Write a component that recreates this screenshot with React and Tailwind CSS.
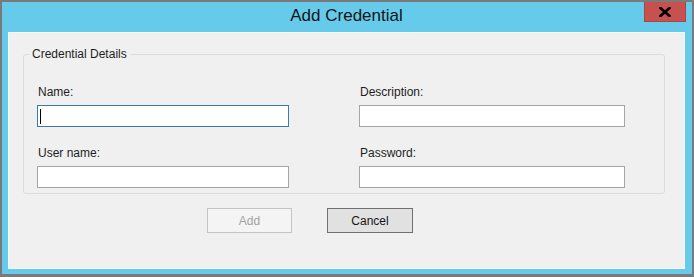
import React from 'react';

const font = { fontFamily: '"Liberation Sans", Arial, sans-serif' };

const Field = ({ label, focused = false }) => (
  <div className="flex flex-col">
    <label className="text-[12px] leading-[14px] text-[#1e1e1e] pl-[1px]">{label}</label>
    <div
      className={`mt-[6px] h-[22px] bg-white border flex items-center pl-[2px] ${
        focused ? 'border-[#3d7bad]' : 'border-[#a5a5a5]'
      }`}
    >
      {focused && <span className="block w-px h-[15px] bg-black" />}
    </div>
  </div>
);

const CloseButton = () => (
  <button className="absolute top-0 right-[-1px] w-[42px] h-[20px] bg-[#c75050] border border-[#b04242] border-t-0 flex items-center justify-center">
    <svg width="12" height="10" viewBox="0 0 12 10">
      <path d="M1.5 1 L10.5 9 M10.5 1 L1.5 9" stroke="#000" strokeWidth="2.6" strokeLinecap="square" />
    </svg>
  </button>
);

export default function App() {
  return (
    <div style={font} className="w-[694px] h-[277px] bg-[#7a7a7a] pt-[2px] pl-[2px] pr-[2px] pb-[3px]">
      <div className="w-full h-full bg-[#66caeb] flex flex-col pl-[6px] pr-[7px] pb-[5px]">
        <div className="relative h-[30px] flex items-center justify-center">
          <span className="text-[17px] text-[#141414] -mt-[2px]">Add Credential</span>
          <CloseButton />
        </div>
        <div className="flex-1 bg-[#f0f0f0] border border-[#f8f8f8] pl-[14px] pt-[14px]">
          <fieldset className="w-[642px] border border-[#d9dde0] rounded-[3px] pt-[24px] pb-[5px]">
            <legend className="ml-[5px] px-[3px] text-[12px] leading-[14px] text-[#1e1e1e]">Credential Details</legend>
            <div className="grid grid-cols-[252px_266px] gap-x-[70px] gap-y-[19px] pl-[13px]">
              <Field label="Name:" focused />
              <Field label="Description:" />
              <Field label="User name:" />
              <Field label="Password:" />
            </div>
          </fieldset>
          <div className="flex gap-[35px] mt-[14px] ml-[184px]">
            <button
              disabled
              className="w-[85px] h-[25px] border border-[#c4c4c4] bg-[#f4f4f4] text-[12px] text-[#a3a3a3]"
            >
              Add
            </button>
            <button className="w-[86px] h-[25px] border border-[#707070] bg-[#e1e1e1] text-[12px] text-[#141414]">
              Cancel
            </button>
          </div>
        </div>
      </div>
    </div>
  );
}
